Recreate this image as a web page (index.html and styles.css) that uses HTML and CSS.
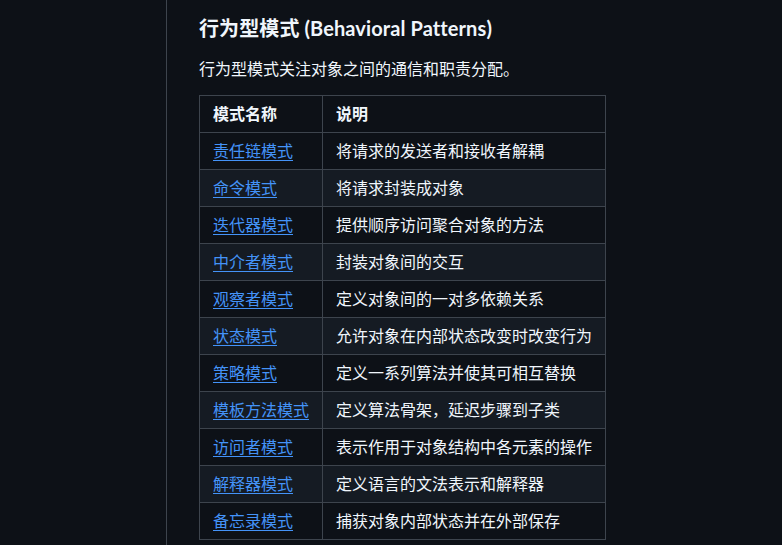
FILE: index.html
```html
<!DOCTYPE html>
<html lang="zh-CN">
<head>
<meta charset="utf-8">
<title>行为型模式</title>
<link rel="stylesheet" href="styles.css">
</head>
<body>
<div class="layout">
  <aside class="side"></aside>
  <main class="content">
    <h3 class="title">行为型模式 (Behavioral Patterns)</h3>
    <p class="lead">行为型模式关注对象之间的通信和职责分配。</p>
    <table class="patterns">
      <thead>
        <tr><th>模式名称</th><th>说明</th></tr>
      </thead>
      <tbody>
        <tr><td><a href="#">责任链模式</a></td><td>将请求的发送者和接收者解耦</td></tr>
        <tr><td><a href="#">命令模式</a></td><td>将请求封装成对象</td></tr>
        <tr><td><a href="#">迭代器模式</a></td><td>提供顺序访问聚合对象的方法</td></tr>
        <tr><td><a href="#">中介者模式</a></td><td>封装对象间的交互</td></tr>
        <tr><td><a href="#">观察者模式</a></td><td>定义对象间的一对多依赖关系</td></tr>
        <tr><td><a href="#">状态模式</a></td><td>允许对象在内部状态改变时改变行为</td></tr>
        <tr><td><a href="#">策略模式</a></td><td>定义一系列算法并使其可相互替换</td></tr>
        <tr><td><a href="#">模板方法模式</a></td><td>定义算法骨架，延迟步骤到子类</td></tr>
        <tr><td><a href="#">访问者模式</a></td><td>表示作用于对象结构中各元素的操作</td></tr>
        <tr><td><a href="#">解释器模式</a></td><td>定义语言的文法表示和解释器</td></tr>
        <tr><td><a href="#">备忘录模式</a></td><td>捕获对象内部状态并在外部保存</td></tr>
      </tbody>
    </table>
  </main>
</div>
</body>
</html>
```

FILE: styles.css
```css
html, body {
  margin: 0;
  padding: 0;
  background: #0d1117;
  color: #f0f6fc;
  font-family: "Lato", "Noto Sans CJK SC", sans-serif;
  font-size: 16px;
  line-height: 1.5;
}

.layout {
  display: flex;
  min-height: 545px;
}

.side {
  width: 166px;
  flex: none;
}

.content {
  border-left: 1px solid #3d444d;
  padding: 16px 32px 0 32px;
  flex: 1;
}

.title {
  margin: 0 0 16px;
  font-size: 20px;
  line-height: 1.25;
  font-weight: 700;
  letter-spacing: 0.1px;
}

.lead {
  margin: 0 0 14px;
}

.patterns {
  border-collapse: collapse;
  border-spacing: 0;
}

.patterns th,
.patterns td {
  border: 1px solid #3d444d;
  padding: 6px 13px;
  text-align: left;
  line-height: 24px;
}

.patterns th {
  font-weight: 600;
}

.patterns tbody tr:nth-child(2n) {
  background: #151b23;
}

.patterns a {
  color: #4493f8;
  text-decoration: underline;
  text-underline-offset: 3px;
}
```
